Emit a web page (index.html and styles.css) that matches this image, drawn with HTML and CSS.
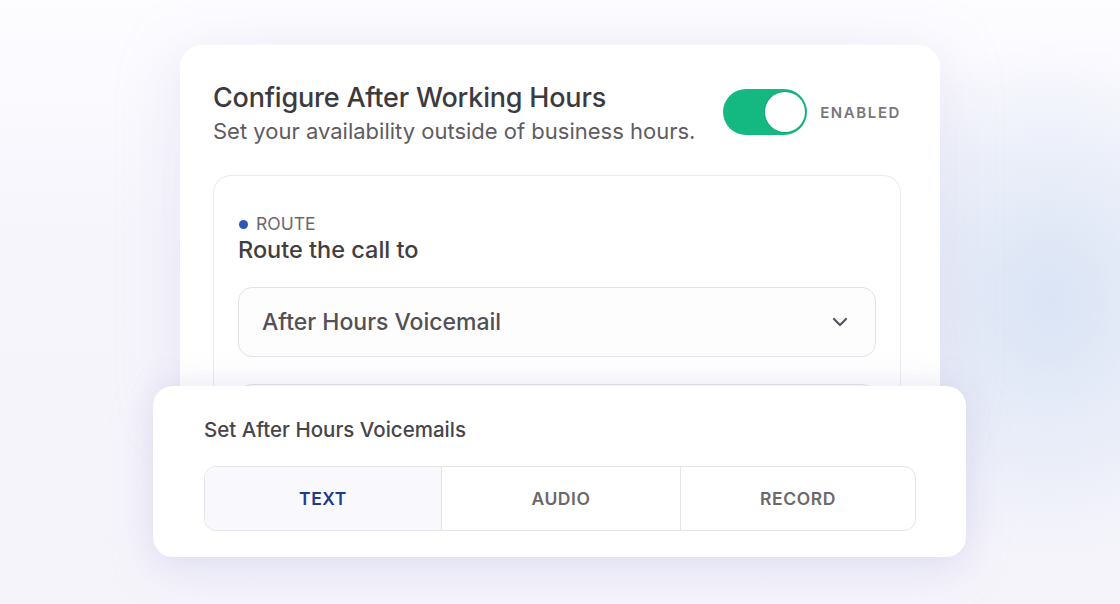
FILE: index.html
```html
<!DOCTYPE html>
<html>
<head>
<meta charset="utf-8">
<link rel="stylesheet" href="styles.css">
</head>
<body>
<div class="stage">
  <section class="main-card">
    <header class="head">
      <div class="head-text">
        <h1 class="title">Configure After Working Hours</h1>
        <p class="subtitle">Set your availability outside of business hours.</p>
      </div>
      <div class="toggle-wrap">
        <span class="toggle"><span class="knob"></span></span>
        <span class="toggle-label">ENABLED</span>
      </div>
    </header>
    <div class="inner-card">
      <div class="eyebrow"><span class="dot"></span>ROUTE</div>
      <div class="field-title">Route the call to</div>
      <div class="select">
        <span class="select-value">After Hours Voicemail</span>
        <svg class="chev" width="16" height="10" viewBox="0 0 16 10"><path d="M2 2 L8 8 L14 2" fill="none" stroke="#55535a" stroke-width="2.2" stroke-linecap="round" stroke-linejoin="round"/></svg>
      </div>
      <div class="select ghost"></div>
    </div>
  </section>
  <section class="overlay-card">
    <div class="overlay-title">Set After Hours Voicemails</div>
    <div class="tabs">
      <div class="tab active">TEXT</div>
      <div class="tab">AUDIO</div>
      <div class="tab">RECORD</div>
    </div>
  </section>
</div>
</body>
</html>
```
FILE: styles.css
```css
* { box-sizing: border-box; margin: 0; padding: 0; }
html, body { width: 1120px; height: 604px; overflow: hidden; }
body {
  font-family: "Inter", "Lato", sans-serif;
  background:
    radial-gradient(ellipse 220px 260px at 1050px 300px, rgba(214, 226, 244, 0.9), rgba(214, 226, 244, 0) 100%),
    linear-gradient(180deg, #fdfcff 0%, #f6f5fc 40%, #f5f4fb 100%);
  color: #3f3d42;
}
.stage { position: relative; width: 1120px; height: 604px; padding: 45px 0 0 180px; }
.main-card {
  width: 760px;
  height: 360px;
  background: #ffffff;
  border-radius: 22px 22px 0 0;
  box-shadow: 0 10px 60px rgba(200, 196, 230, 0.35);
  padding: 37px 39px 0 33px;
  overflow: hidden;
}
.head { display: flex; justify-content: space-between; align-items: flex-start; }
.title { font-size: 27px; font-weight: 500; color: #3c3a3f; line-height: 32px; letter-spacing: -0.2px; }
.subtitle { font-size: 22px; font-weight: 400; color: #5e5c62; line-height: 28px; margin-top: 3px; }
.toggle-wrap { display: flex; align-items: center; gap: 13px; margin-top: 7px; }
.toggle {
  width: 84px; height: 46px; border-radius: 23px; background: #14b881;
  display: flex; align-items: center; justify-content: flex-end; padding-right: 2px;
}
.knob { width: 40px; height: 40px; border-radius: 50%; background: #fff; box-shadow: 0 0 0 1px #10a872; }
.toggle-label { font-size: 15px; font-weight: 600; letter-spacing: 1.6px; color: #78767b; }
.inner-card {
  margin-top: 30px;
  border: 1px solid #ebeaef;
  border-bottom: none;
  border-radius: 18px 18px 0 0;
  padding: 38px 24px 0 24px;
  height: 240px;
}
.eyebrow { display: flex; align-items: center; gap: 8px; font-size: 17.5px; color: #6a686d; line-height: 20px; }
.dot { width: 9px; height: 9px; border-radius: 50%; background: #2f56b9; margin-left: 1px; }
.field-title { font-size: 23.5px; font-weight: 500; color: #403e43; line-height: 30px; margin-top: 1px; }
.select {
  margin-top: 22px;
  height: 70px;
  border: 1px solid #e3e2e7;
  border-radius: 14px;
  background: #fefdfe;
  display: flex; align-items: center; justify-content: space-between;
  padding: 0 27px 0 23px;
}
.select.ghost { margin-top: 27px; }
.select-value { font-size: 23px; color: #524f56; font-weight: 500; }
.chev { display: block; }
.overlay-card {
  position: absolute;
  left: 153px; top: 386px;
  width: 813px; height: 171px;
  background: #fff;
  border-radius: 20px;
  box-shadow: 0 12px 40px rgba(190, 186, 225, 0.35), 0 -6px 24px rgba(200, 198, 220, 0.18);
  padding: 31px 50px 0 51px;
}
.overlay-title { font-size: 20.5px; font-weight: 500; color: #47454a; line-height: 26px; }
.tabs {
  margin-top: 23px;
  display: grid; grid-template-columns: 236px 239px 1fr;
  height: 65px;
  border: 1px solid #e4e3e8;
  border-radius: 12px;
  overflow: hidden;
}
.tab {
  display: flex; align-items: center; justify-content: center;
  font-size: 17.5px; font-weight: 600; letter-spacing: 0.6px; color: #6a686d;
  border-left: 1px solid #e4e3e8;
}
.tab:first-child { border-left: none; }
.tab.active { background: #f8f8fd; color: #1e3a8a; }
```
